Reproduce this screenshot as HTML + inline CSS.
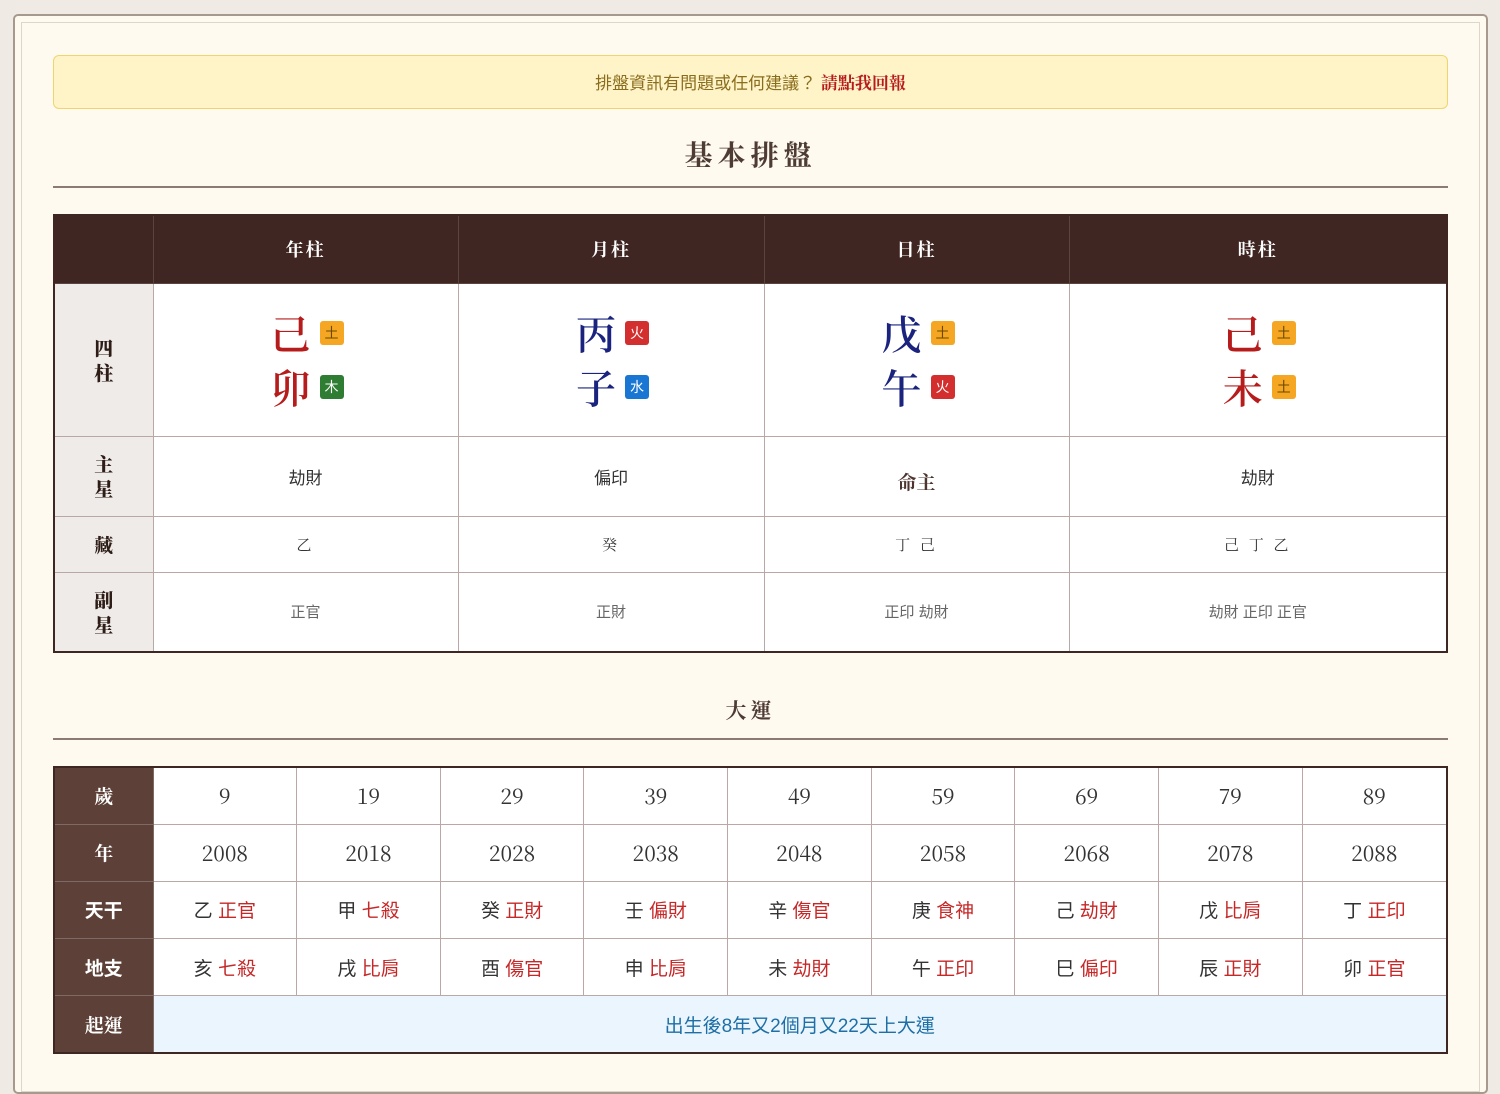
<!DOCTYPE html>
<html><head><meta charset="utf-8"><style>
*{margin:0;padding:0;box-sizing:border-box}
body{width:1500px;height:1073px;background:#efebe4;font-family:"Liberation Serif","Noto Serif CJK TC","Noto Serif CJK SC",serif;position:relative;overflow:hidden}
.card{position:absolute;left:13px;top:14px;width:1475px;height:1080px;border:2px solid #a8998f;border-radius:5px;background:#fefaf0}
.inner{position:absolute;left:21px;top:22px;width:1459px;height:1070px;border:1px solid #ddd6cc}
.banner{position:absolute;left:53px;top:55px;width:1395px;height:54px;background:#fff3c8;border:1.5px solid #f0d56e;border-radius:6px;text-align:center;line-height:52px;font-size:17px;color:#8a6d1c;font-family:"Liberation Sans","Noto Sans CJK TC",sans-serif}
.banner b{color:#b71c1c;font-family:"Noto Serif CJK TC",serif}
.title{position:absolute;left:53px;width:1395px;text-align:center;color:#4e3b33;font-weight:bold}
.hr{position:absolute;left:53px;width:1395px;height:2px;background:#8c7b73}
table{position:absolute;left:53px;width:1395px;border-collapse:collapse;border:2.5px solid #3e2723}
td,th{border:1px solid #b9a8a6;text-align:center;vertical-align:middle}
#t1 th{background:#3f2622;color:#fff;font-size:18px;letter-spacing:2px;height:68px;border-color:#5a4440}
#t1 .lab{background:#efebe9;color:#2e1d16;font-weight:900;font-size:19px;line-height:25px;width:99px;font-family:"Noto Serif CJK TC",serif}
#t1 td{background:#fff}
.gz{display:inline-block;text-align:left}
.gz div{height:54px;display:flex;align-items:center}
.gz span.c{font-size:40px;font-weight:600;width:46px;display:inline-block;text-align:center;font-family:"Noto Serif CJK TC",serif}
.bd{display:inline-block;width:24px;height:24px;border-radius:3px;font-size:14px;line-height:24px;text-align:center;margin-left:6px;font-family:"Noto Sans CJK TC",sans-serif}
.e{background:#f5a623;color:#6b4a00}.w{background:#2e7d32;color:#fff}.f{background:#d32f2f;color:#fff}.s{background:#1976d2;color:#fff}
.red{color:#b71c1c}.blue{color:#1a237e}
.ss{font-family:"Liberation Sans","Noto Sans CJK TC",sans-serif}
#t2 .lab{background:#5d4037;color:#fff;font-weight:bold;font-size:19px;width:99px;border-color:#7d6a64}
#t2 td{height:57px;background:#fff;font-size:19px;color:#333}
#t2 td.n{font-family:"Noto Serif CJK TC",serif;font-size:21px;color:#333}
#t2 td .r{color:#c62828}
</style></head><body>
<div class="card"></div><div class="inner"></div>
<div class="banner">排盤資訊有問題或任何建議？ <b>請點我回報</b></div>
<div class="title" style="top:134px;font-size:28px;letter-spacing:5px">基本排盤</div>
<div class="hr" style="top:186px"></div>
<table id="t1" style="top:214px;height:438px">
<tr><th style="width:99px"></th><th style="width:305px">年柱</th><th style="width:306px">月柱</th><th style="width:305px">日柱</th><th>時柱</th></tr>
<tr style="height:153px"><td class="lab">四<br>柱</td>
<td><div class="gz"><div><span class="c red">己</span><span class="bd e">土</span></div><div><span class="c red">卯</span><span class="bd w">木</span></div></div></td>
<td><div class="gz"><div><span class="c blue">丙</span><span class="bd f">火</span></div><div><span class="c blue">子</span><span class="bd s">水</span></div></div></td>
<td><div class="gz"><div><span class="c blue">戊</span><span class="bd e">土</span></div><div><span class="c blue">午</span><span class="bd f">火</span></div></div></td>
<td><div class="gz"><div><span class="c red">己</span><span class="bd e">土</span></div><div><span class="c red">未</span><span class="bd e">土</span></div></div></td></tr>
<tr style="height:80px"><td class="lab">主<br>星</td><td class="ss" style="font-size:17px;color:#333">劫財</td><td class="ss" style="font-size:17px;color:#333">偏印</td><td style="font-size:19px;color:#4e342e;font-weight:bold;padding-top:10px">命主</td><td class="ss" style="font-size:17px;color:#333">劫財</td></tr>
<tr style="height:56px"><td class="lab">藏</td><td style="font-size:15px;letter-spacing:3px;color:#333">乙</td><td style="font-size:15px;letter-spacing:3px;color:#333">癸</td><td style="font-size:15px;letter-spacing:3px;color:#333">丁 己</td><td style="font-size:15px;letter-spacing:3px;color:#333">己 丁 乙</td></tr>
<tr style="height:80px"><td class="lab">副<br>星</td><td class="ss" style="font-size:15px;color:#666">正官</td><td class="ss" style="font-size:15px;color:#666">正財</td><td class="ss" style="font-size:15px;color:#666">正印 劫財</td><td class="ss" style="font-size:15px;color:#666">劫財 正印 正官</td></tr>
</table>
<div class="title" style="top:695px;font-size:21px;letter-spacing:4px">大運</div>
<div class="hr" style="top:738px"></div>
<table id="t2" style="top:766px;height:288px">
<tr><td class="lab">歲</td><td class="n">9</td><td class="n">19</td><td class="n">29</td><td class="n">39</td><td class="n">49</td><td class="n">59</td><td class="n">69</td><td class="n">79</td><td class="n">89</td></tr>
<tr><td class="lab">年</td><td class="n">2008</td><td class="n">2018</td><td class="n">2028</td><td class="n">2038</td><td class="n">2048</td><td class="n">2058</td><td class="n">2068</td><td class="n">2078</td><td class="n">2088</td></tr>
<tr class="ss"><td class="lab">天干</td><td>乙 <span class="r">正官</span></td><td>甲 <span class="r">七殺</span></td><td>癸 <span class="r">正財</span></td><td>壬 <span class="r">偏財</span></td><td>辛 <span class="r">傷官</span></td><td>庚 <span class="r">食神</span></td><td>己 <span class="r">劫財</span></td><td>戊 <span class="r">比肩</span></td><td>丁 <span class="r">正印</span></td></tr>
<tr class="ss"><td class="lab">地支</td><td>亥 <span class="r">七殺</span></td><td>戌 <span class="r">比肩</span></td><td>酉 <span class="r">傷官</span></td><td>申 <span class="r">比肩</span></td><td>未 <span class="r">劫財</span></td><td>午 <span class="r">正印</span></td><td>巳 <span class="r">偏印</span></td><td>辰 <span class="r">正財</span></td><td>卯 <span class="r">正官</span></td></tr>
<tr><td class="lab">起運</td><td colspan="9" class="ss" style="background:#eaf5fd;color:#1d6fa5;font-size:19px">出生後8年又2個月又22天上大運</td></tr>
</table>
</body></html>
